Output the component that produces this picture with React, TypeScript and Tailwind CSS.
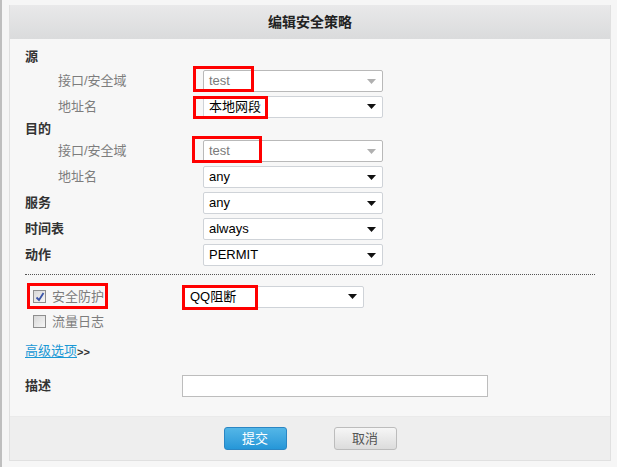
import React from 'react';

const CN = { fontFamily: '"Liberation Sans", "Noto Sans CJK SC", sans-serif' };

type SelProps = { value: string; disabled?: boolean; width?: string };

const Select = ({ value, disabled, width = 'w-[180px]' }: SelProps) => (
  <div
    className={`${width} h-[22px] flex items-center justify-between bg-white border rounded-[2px] pl-[5px] pr-[6px] text-[13px] ${
      disabled ? 'border-[#b9b9b9] text-[#7a7a7a]' : 'border-[#cfd3d8] text-black'
    }`}
  >
    <span>{value}</span>
    <svg width="9" height="5" viewBox="0 0 9 5">
      <path d="M0 0h9L4.5 5z" fill={disabled ? '#b0b0b0' : '#111'} />
    </svg>
  </div>
);

// red annotation box laid over a field
const Mark = ({ className }: { className: string }) => (
  <div className={`absolute border-[3px] border-[#ff0000] pointer-events-none ${className}`} />
);

const Checkbox = ({ checked }: { checked?: boolean }) => (
  <div className="w-[13px] h-[13px] border border-[#8e8e8e] bg-gradient-to-br from-[#d8d8d8] to-[#f6f6f6] flex items-center justify-center">
    {checked && (
      <svg width="10" height="10" viewBox="0 0 10 10">
        <path d="M1.5 5.5 L4 8 L8.5 1" fill="none" stroke="#3b55a8" strokeWidth="1.8" />
      </svg>
    )}
  </div>
);

const Row = ({ label, sub, children, h = 'h-[26px]' }: { label: string; sub?: boolean; children?: React.ReactNode; h?: string }) => (
  <div className={`flex items-center ${h}`}>
    <div
      className={
        sub
          ? 'w-[178px] pl-[33px] text-[13px] text-[#7d7d7d]'
          : 'w-[178px] text-[13px] font-bold text-[#333]'
      }
    >
      {label}
    </div>
    {children}
  </div>
);

export default function App() {
  return (
    <div style={CN} className="w-[617px] h-[467px] bg-[#f6f6f6] border-l-2 border-[#bfbfbf] pl-[7px] pt-[5px] overflow-hidden">
      <div className="w-[602px] h-[456px] border border-t-0 border-[#e0e0e0] bg-[#f7f7f7] flex flex-col">
        <div className="h-[34px] bg-gradient-to-b from-[#e9e9ea] to-[#dadbdc] flex items-center justify-center text-[14px] font-bold text-[#222]">
          编辑安全策略
        </div>

        <div className="relative flex-1 pl-[15px] pt-[6px]">
          <Row label="源" h="h-[23px]" />
          <Row label="接口/安全域" sub>
            <Select value="test" disabled />
          </Row>
          <Row label="地址名" sub h="h-[25px]">
            <Select value="本地网段" />
          </Row>
          <Row label="目的" h="h-[19px]" />
          <Row label="接口/安全域" sub>
            <Select value="test" disabled />
          </Row>
          <Row label="地址名" sub>
            <Select value="any" />
          </Row>
          <Row label="服务">
            <Select value="any" />
          </Row>
          <Row label="时间表">
            <Select value="always" />
          </Row>
          <Row label="动作">
            <Select value="PERMIT" />
          </Row>

          <div className="mt-[6px] mr-[15px] border-t border-dotted border-[#555]" />

          <div className="flex items-center h-[25px] mt-[9px]">
            <div className="w-[159px] flex items-center gap-[6px] pl-[8px] text-[13px] text-[#7d7d7d]">
              <Checkbox checked />
              <span>安全防护</span>
            </div>
            <Select value="QQ阻断" />
          </div>
          <div className="flex items-center h-[25px] pl-[8px] gap-[6px] text-[13px] text-[#7d7d7d]">
            <Checkbox />
            <span>流量日志</span>
          </div>

          <div className="mt-[7px] text-[13px] flex items-end">
            <span className="text-[#1a98d5] underline underline-offset-2">高级选项</span>
            <span className="text-[#333] font-bold text-[11px]">&gt;&gt;</span>
          </div>

          <div className="flex items-center mt-[14px] h-[22px]">
            <div className="w-[157px] text-[13px] font-bold text-[#333]">描述</div>
            <div className="w-[306px] h-[22px] bg-white border border-[#bdbdbd]" />
          </div>

          <Mark className="left-[183px] top-[27px] w-[61px] h-[26px]" />
          <Mark className="left-[183px] top-[57px] w-[75px] h-[23px]" />
          <Mark className="left-[182px] top-[97px] w-[70px] h-[27px]" />
          <Mark className="left-[17px] top-[244px] w-[81px] h-[26px]" />
          <Mark className="left-[172px] top-[246px] w-[76px] h-[25px]" />
        </div>

        <div className="h-[44px] bg-[#eeeeee] border-t border-[#eaeaea] flex items-center justify-center gap-[47px]">
          <button className="w-[63px] h-[23px] rounded-[3px] border border-[#2a86c4] bg-gradient-to-b from-[#53b6e7] to-[#2597d8] text-white text-[13px]">
            提交
          </button>
          <button className="w-[63px] h-[23px] rounded-[3px] border border-[#bcbcbc] bg-gradient-to-b from-[#f6f6f6] to-[#dcdcdc] text-[#555] text-[13px]">
            取消
          </button>
        </div>
      </div>
    </div>
  );
}
